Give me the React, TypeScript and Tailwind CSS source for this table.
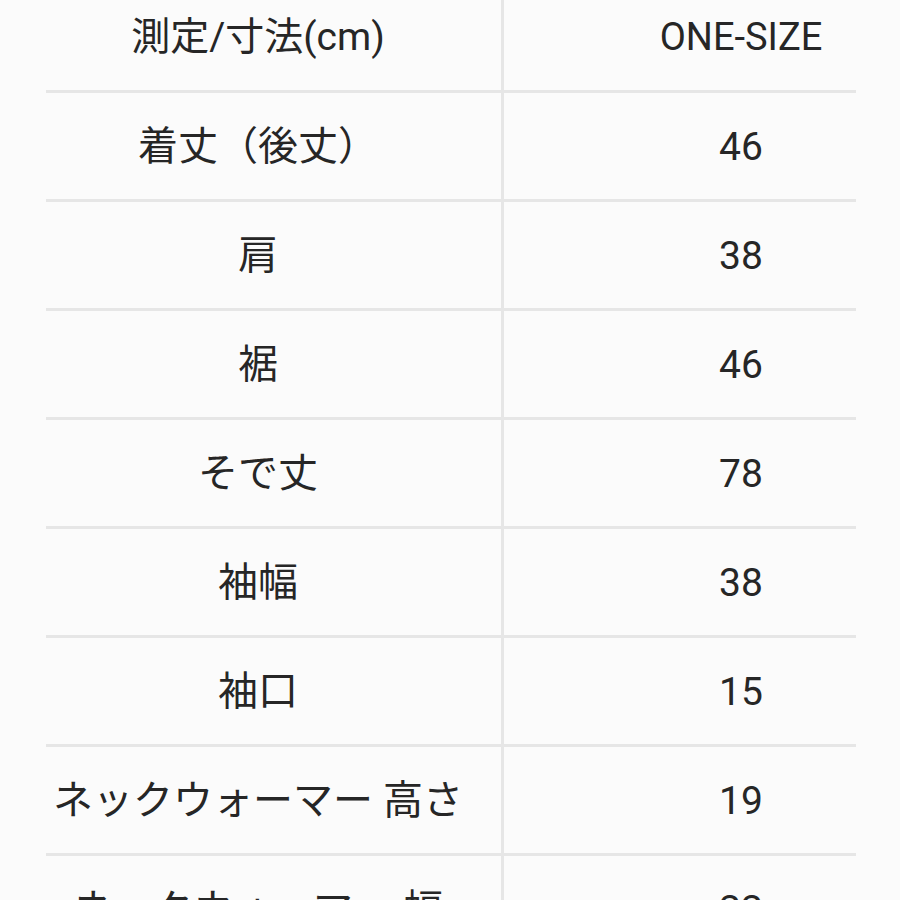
const rows = [
  { label: "着丈（後丈）", value: "46" },
  { label: "肩", value: "38" },
  { label: "裾", value: "46" },
  { label: "そで丈", value: "78" },
  { label: "袖幅", value: "38" },
  { label: "袖口", value: "15" },
  { label: "ネックウォーマー 高さ", value: "19" },
  { label: "ネックウォーマー 幅", value: "22" },
];

const App = () => {
  return (
    <div
      className="h-[900px] w-[900px] overflow-hidden bg-[#fbfbfb] text-[#262626]"
      style={{ fontFamily: 'Roboto, "Noto Sans CJK JP", sans-serif' }}
    >
      <div className="flex">
        {/* Left column: measurement names */}
        <div className="w-[504px] border-r-[3px] border-[#e6e6e6] min-h-[965px]">
          <div className="ml-[46px] h-[93px] flex items-center justify-center pr-[31px] pb-[16px] border-b-[3px] border-[#e6e6e6] text-[39px] whitespace-nowrap">
            測定/寸法(cm)
          </div>
          {rows.map((row) => (
            <div
              key={row.label}
              className="ml-[46px] h-[109px] flex items-center justify-center pr-[31px] pt-[2px] border-b-[3px] border-[#e6e6e6] text-[40px] whitespace-nowrap"
            >
              {row.label}
            </div>
          ))}
        </div>

        {/* Right column: values */}
        <div className="flex-1">
          <div className="mr-[44px] h-[93px] flex items-center justify-center pl-[122px] pb-[16px] border-b-[3px] border-[#e6e6e6] text-[38px] whitespace-nowrap">
            ONE-SIZE
          </div>
          {rows.map((row) => (
            <div
              key={row.label}
              className="mr-[44px] h-[109px] flex items-center justify-center pl-[122px] pt-[2px] border-b-[3px] border-[#e6e6e6] text-[39px]"
            >
              {row.value}
            </div>
          ))}
        </div>
      </div>
    </div>
  );
};

export default App;
